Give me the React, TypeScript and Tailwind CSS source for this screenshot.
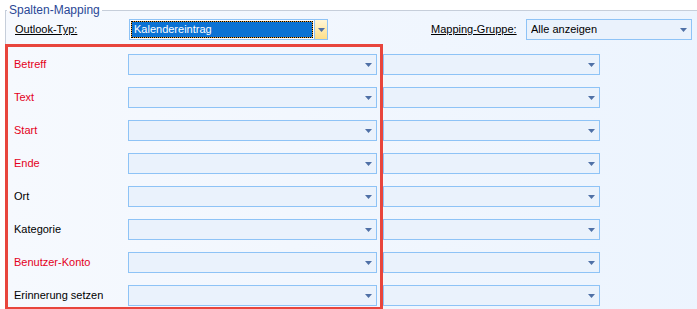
import React from "react";

const rows = [
  { label: "Betreff", required: true },
  { label: "Text", required: true },
  { label: "Start", required: true },
  { label: "Ende", required: true },
  { label: "Ort", required: false },
  { label: "Kategorie", required: false },
  { label: "Benutzer-Konto", required: true },
  { label: "Erinnerung setzen", required: false },
];

function Arrow() {
  return (
    <svg width="7" height="4" viewBox="0 0 7 4" className="shrink-0">
      <polygon points="0,0 7,0 3.5,4" fill="#4f70a6" />
    </svg>
  );
}

function Combo({ width, value }: { width: string; value?: string }) {
  return (
    <div
      className={`${width} h-[21px] flex items-center justify-between border border-[#8ec3f6] bg-[#eaf2fc] pl-[4px] pr-[4px] text-black`}
    >
      <span className="truncate">{value ?? ""}</span>
      <Arrow />
    </div>
  );
}

export default function App() {
  return (
    <div
      className="w-[697px] h-[309px] overflow-hidden bg-white text-[11px] leading-[13px]"
      style={{ fontFamily: '"Liberation Sans", Arial, sans-serif' }}
    >
      <fieldset className="mt-[2px] ml-[5px] h-[330px] w-[720px] border-t border-l border-[#c6ceda] bg-gradient-to-r from-[#f6f9fe] to-[#ecf4fe] p-0">
        <legend className="ml-[1px] px-[2px] leading-[16px] text-[12px] text-[#2a4796]">
          Spalten-Mapping
        </legend>

        {/* Outlook-Typ / Mapping-Gruppe */}
        <div className="flex items-center h-[21px] mt-[1px]">
          <span className="ml-[9px] w-[114px] underline text-black">Outlook-Typ:</span>
          <div className="w-[199px] h-[21px] flex border border-[#8ec3f6] bg-white">
            <div className="flex-1 m-[1px] bg-[#e8a33a]">
              <div className="h-full border border-dotted border-black bg-[#0a72d4] bg-clip-padding text-white pl-[2px] flex items-center">
                Kalendereintrag
              </div>
            </div>
            <div className="w-[13px] flex items-center justify-center bg-gradient-to-b from-[#fff6d6] to-[#ffdf86] border-l border-[#8ec3f6]">
              <Arrow />
            </div>
          </div>
          <span className="ml-[103px] w-[95px] underline text-black">Mapping-Gruppe:</span>
          <Combo width="w-[166px]" value="Alle anzeigen" />
        </div>

        {/* field rows */}
        <div className="flex items-start mt-[4px] ml-[-1px]">
          <div className="w-[378px] h-[266px] border-[3px] border-[#e8453c] pt-[7px] pl-[6px] pr-[3px] flex flex-col gap-[12px]">
            {rows.map((r) => (
              <div key={r.label} className="flex items-center justify-between h-[21px]">
                <span className={r.required ? "text-[#e4001b]" : "text-black"}>{r.label}</span>
                <Combo width="w-[249px]" />
              </div>
            ))}
          </div>
          <div className="pt-[10px] flex flex-col gap-[12px]">
            {rows.map((r) => (
              <Combo key={r.label} width="w-[217px]" />
            ))}
          </div>
        </div>
      </fieldset>
    </div>
  );
}
